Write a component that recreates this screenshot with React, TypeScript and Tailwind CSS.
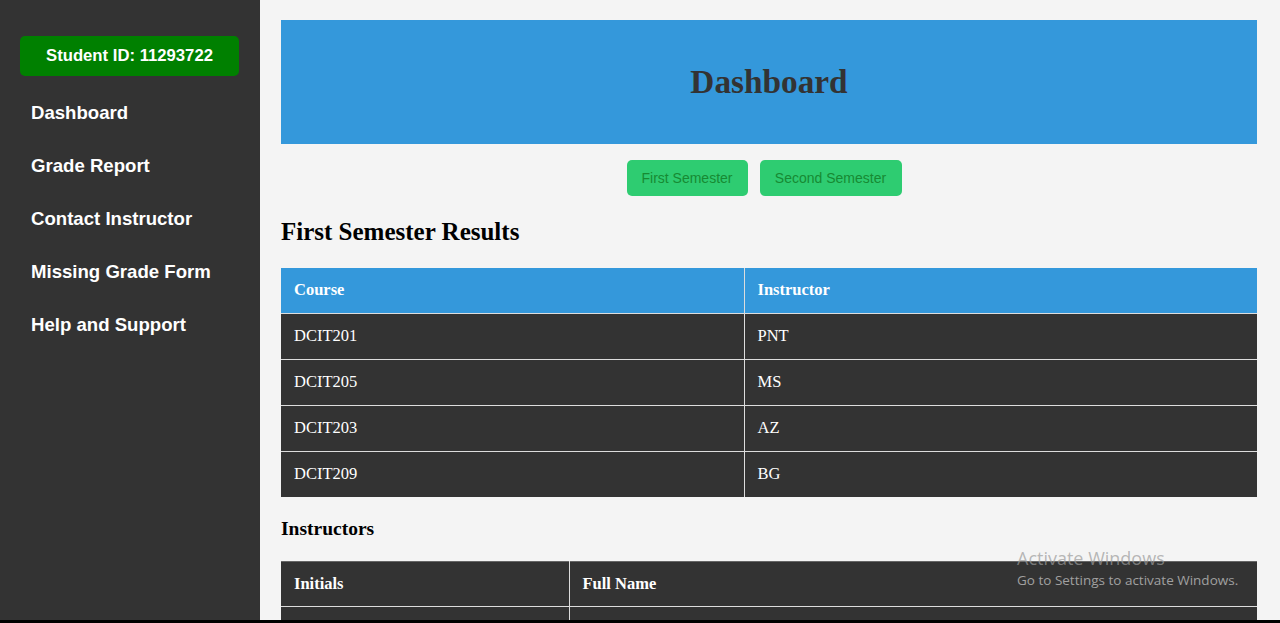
import React from "react";

const serif = { fontFamily: '"Liberation Serif", "Times New Roman", serif' };

export default function App() {
  const courses = [
    ["DCIT201", "PNT"],
    ["DCIT205", "MS"],
    ["DCIT203", "AZ"],
    ["DCIT209", "BG"],
  ];
  const navs = ["Dashboard", "Grade Report", "Contact Instructor", "Missing Grade Form", "Help and Support"];
  return (
    <div className="w-[1280px] h-[623px] flex flex-col overflow-hidden relative bg-black">
      <div className="flex h-[620px] overflow-hidden">
        <aside
          className="w-[260px] shrink-0 bg-[#333333] pt-[36px] px-[20px]"
          style={{ fontFamily: '"Liberation Sans", Arial, sans-serif' }}
        >
          <div className="w-[219px] h-[40px] rounded-[5px] bg-[#008000] text-white font-bold text-[16.7px] flex items-center justify-center">
            Student ID: 11293722
          </div>
          <nav className="flex flex-col mt-[10px]">
            {navs.map((n) => (
              <div key={n} className="h-[53px] flex items-center pl-[11px] text-white font-bold text-[18.6px]">
                {n}
              </div>
            ))}
          </nav>
        </aside>
        <main className="flex-1 bg-[#f4f4f4] pl-[21px] pr-[23px] pt-[20px]" style={serif}>
          <div className="h-[124px] bg-[#3498db] flex items-center justify-center">
            <h1 className="text-[33.3px] font-bold text-[#333333] leading-none">Dashboard</h1>
          </div>
          <div
            className="flex justify-center mt-[16px] pl-[2px]"
            style={{ fontFamily: '"Liberation Sans", Arial, sans-serif' }}
          >
            <button className="h-[36px] w-[121px] mr-[12px] rounded-[5px] bg-[#2ecc71] text-[#178a33] text-[14px]">
              First Semester
            </button>
            <button className="h-[36px] w-[142px] mr-[12px] rounded-[5px] bg-[#2ecc71] text-[#178a33] text-[14px]">
              Second Semester
            </button>
          </div>
          <h2 className="text-[25px] font-bold text-black mt-[22px] leading-[28px]">First Semester Results</h2>
          <table className="w-full mt-[22px] border-collapse text-[16.5px]">
            <thead>
              <tr className="bg-[#3498db] text-white h-[45px]">
                <th className="w-[463px] text-left font-bold pl-[13px] border-r border-[#dddddd]">Course</th>
                <th className="text-left font-bold pl-[13px]">Instructor</th>
              </tr>
            </thead>
            <tbody>
              {courses.map(([c, i]) => (
                <tr key={c} className="bg-[#333333] text-white h-[46px] border-t border-[#dddddd]">
                  <td className="pl-[13px] border-r border-[#dddddd]">{c}</td>
                  <td className="pl-[13px]">{i}</td>
                </tr>
              ))}
            </tbody>
          </table>
          <h3 className="text-[19.5px] font-bold text-black mt-[20px] leading-[24px]">Instructors</h3>
          <table className="w-full mt-[20px] border-collapse text-[16.5px]">
            <thead>
              <tr className="bg-[#333333] text-white h-[45px] border-t border-[#666666]">
                <th className="w-[288px] text-left font-bold pl-[13px] border-r border-[#dddddd]">Initials</th>
                <th className="text-left font-bold pl-[13px]">Full Name</th>
              </tr>
            </thead>
            <tbody>
              <tr className="bg-[#333333] text-white h-[46px] border-t border-[#dddddd]">
                <td className="pl-[13px] border-r border-[#dddddd]"></td>
                <td className="pl-[13px]"></td>
              </tr>
            </tbody>
          </table>
        </main>
      </div>
      <div className="h-[3px] bg-black" />
      <div
        className="absolute left-[1017px] top-[547px] pointer-events-none"
        style={{ fontFamily: '"Open Sans", "Noto Sans", sans-serif' }}
      >
        <div className="text-[18px] leading-[22px] text-[#9a9a9a]/70">Activate Windows</div>
        <div className="text-[13.5px] leading-[20px] mt-[1px] text-[#a0a0a0]">Go to Settings to activate Windows.</div>
      </div>
    </div>
  );
}
